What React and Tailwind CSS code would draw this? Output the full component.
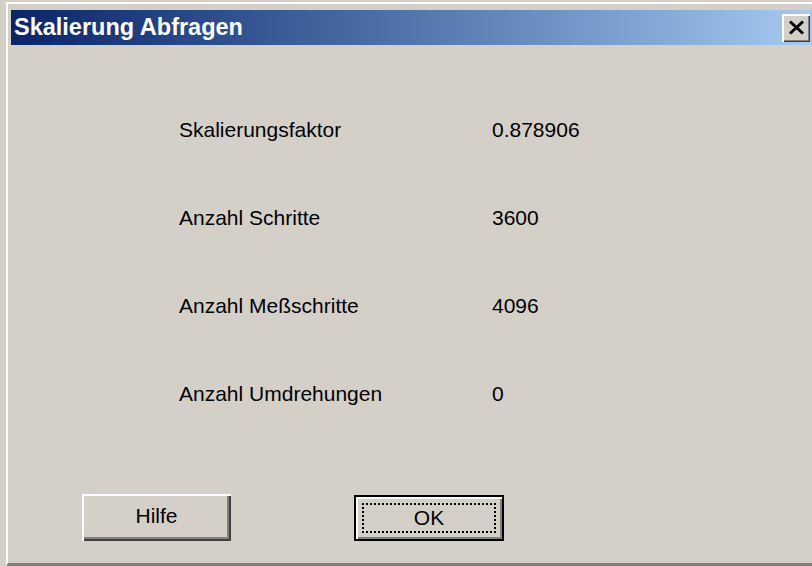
import React from 'react';

const ROWS = [
  ['Skalierungsfaktor', '0.878906'],
  ['Anzahl Schritte', '3600'],
  ['Anzahl Meßschritte', '4096'],
  ['Anzahl Umdrehungen', '0'],
];

function CloseButton() {
  return (
    <button className="w-[28px] h-[28px] mr-[2px] bg-[#d4d0c8] flex items-center justify-center shadow-[inset_2px_2px_0_#ffffff,inset_-1px_-1px_0_#404040,inset_-2px_-2px_0_#808080]">
      <svg width="17" height="15" viewBox="0 0 17 15">
        <path d="M2 1.5 L15 13.5 M15 1.5 L2 13.5" stroke="#000" strokeWidth="3" fill="none" />
      </svg>
    </button>
  );
}

export default function App() {
  return (
    <div className="w-[812px] h-[566px] bg-[#d4d0c8] pl-[6px] pt-[2px] overflow-hidden font-['Liberation_Sans',Arial,sans-serif] text-black">
      {/* window frame */}
      <div className="h-full flex flex-col border-l-2 border-t-2 border-white border-b-[3px] border-b-[#808080] pl-[3px] pt-[6px]">
        {/* title bar */}
        <div className="h-[35px] flex items-center justify-between bg-linear-to-r from-[#0a246a] to-[#a6caf0]">
          <span className="pl-[3px] text-[23.5px] font-bold text-white leading-none">Skalierung Abfragen</span>
          <CloseButton />
        </div>

        {/* values */}
        <div className="pt-[41px] pl-[168px] grid grid-cols-[313px_auto] text-[21px] leading-[88px]">
          {ROWS.map(([label, value]) => (
            <React.Fragment key={label}>
              <span>{label}</span>
              <span>{value}</span>
            </React.Fragment>
          ))}
        </div>

        {/* buttons */}
        <div className="mt-[56px] pl-[71px] flex items-start text-[21px]">
          <button className="w-[149px] h-[47px] bg-[#d4d0c8] flex items-center justify-center pb-[3px] shadow-[inset_2px_2px_0_#ffffff,inset_-2px_-2px_0_#404040,inset_-4px_-4px_0_#808080]">
            Hilfe
          </button>
          <button className="ml-[123px] mt-[1px] w-[150px] h-[46px] bg-[#d4d0c8] border-2 border-black flex p-[6px] shadow-[inset_2px_2px_0_#ffffff,inset_-2px_-2px_0_#808080]">
            <span className="flex-1 flex items-center justify-center border-2 border-dotted border-black">OK</span>
          </button>
        </div>
      </div>
    </div>
  );
}
